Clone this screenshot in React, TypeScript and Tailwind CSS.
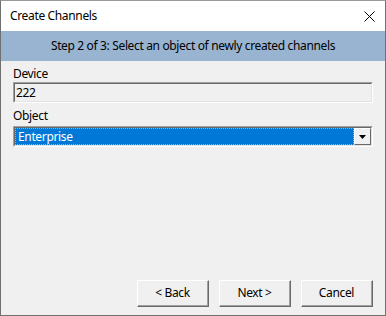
import React from "react";

const font = { fontFamily: '"Segoe UI", "Noto Sans", Arial, sans-serif' };

function Sunken({ children, className = "" }: { children: React.ReactNode; className?: string }) {
  return (
    <div className="border-t border-l border-[#a0a0a0] border-r border-b border-r-white border-b-white">
      <div className={`border-t border-l border-[#696969] border-r border-b border-r-[#e3e3e3] border-b-[#e3e3e3] ${className}`}>
        {children}
      </div>
    </div>
  );
}

function Button({ label }: { label: string }) {
  return (
    <div className="w-[72px] h-[27px] border-t border-l border-white border-r border-b border-r-[#696969] border-b-[#696969]">
      <div className="h-full border-r border-b border-r-[#a0a0a0] border-b-[#a0a0a0] bg-[#f0f0f0] flex items-center justify-center text-[12px] text-black">
        {label}
      </div>
    </div>
  );
}

export default function App() {
  return (
    <div
      className="w-[386px] h-[316px] flex flex-col bg-[#f0f0f0] border-x border-b border-[#707070] border-t border-t-[#9a9a9a] text-black tracking-[-0.35px]"
      style={font}
    >
      {/* title bar */}
      <div className="h-[30px] bg-white flex items-center justify-between pl-[9px] pr-[10px]">
        <span className="text-[12px]">Create Channels</span>
        <svg width="11" height="11" viewBox="0 0 11 11">
          <path d="M0.5 0.5 L10.5 10.5 M10.5 0.5 L0.5 10.5" stroke="#000" strokeWidth="1" />
        </svg>
      </div>

      {/* step header */}
      <div className="h-[30px] bg-[#99b4d1] flex items-center justify-center text-[12px]">
        Step 2 of 3: Select an object of newly created channels
      </div>

      {/* body */}
      <div className="flex-1 flex flex-col px-[12px] pt-[5px]">
        <div className="h-[16px] leading-[16px] text-[12px]">Device</div>
        <Sunken className="h-[19px] bg-[#f0f0f0] flex items-center pl-[1px] text-[12px]">222</Sunken>

        <div className="mt-[5px] mb-[2px] h-[16px] leading-[16px] text-[12px]">Object</div>
        <Sunken className="h-[19px] bg-white flex">
          <div className="flex-1 bg-[#0078d7] text-white text-[12px] flex items-center pl-[2px] border border-dotted border-[#7fb8ea]">
            Enterprise
          </div>
          <div className="w-[17px] border-t border-l border-white border-r border-b border-r-[#696969] border-b-[#696969] bg-[#f0f0f0] flex items-center justify-center">
            <svg width="7" height="4" viewBox="0 0 7 4">
              <path d="M0 0 H7 L3.5 4 Z" fill="#000" />
            </svg>
          </div>
        </Sunken>

        <div className="mt-auto mb-[8px] flex justify-end gap-[10px]">
          <Button label="< Back" />
          <Button label="Next >" />
          <Button label="Cancel" />
        </div>
      </div>
    </div>
  );
}
